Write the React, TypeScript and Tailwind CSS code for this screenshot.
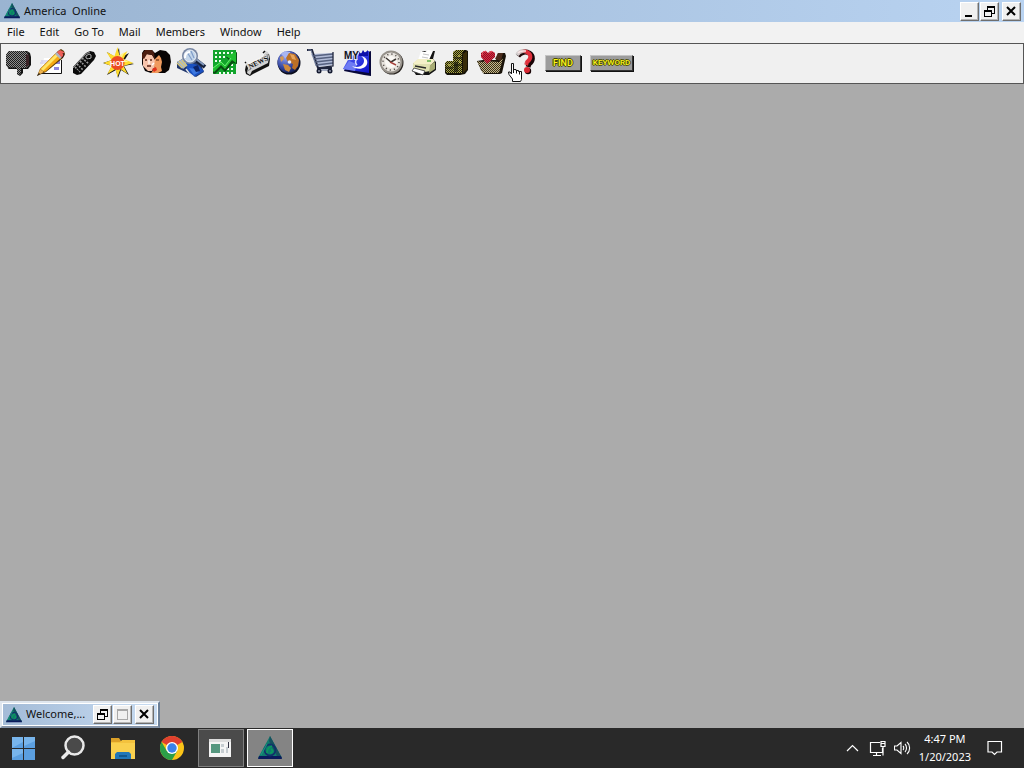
import React from "react";
import clsx from "clsx";

const menus = ["File", "Edit", "Go To", "Mail", "Members", "Window", "Help"];

interface IconProps {
  w: number;
  children: React.ReactNode;
}

const ToolIcon: React.FC<IconProps> = ({ w, children }) => (
  <svg width={w} height={28} viewBox={`0 0 ${w} 28`} className="overflow-visible" aria-hidden="true">
    {children}
  </svg>
);

const Dithers = () => (
  <svg width="0" height="0" className="absolute" aria-hidden="true">
    <defs>
      <pattern id="dither-gray" width="2" height="2" patternUnits="userSpaceOnUse">
        <rect width="2" height="2" fill="#8e8e8e" />
        <rect width="1" height="1" fill="#1c1c1c" />
        <rect x="1" y="1" width="1" height="1" fill="#1c1c1c" />
      </pattern>
      <pattern id="dither-olive" width="2" height="2" patternUnits="userSpaceOnUse">
        <rect width="2" height="2" fill="#a8a444" />
        <rect width="1" height="1" fill="#1b1a08" />
        <rect x="1" y="1" width="1" height="1" fill="#1b1a08" />
      </pattern>
      <pattern id="dither-tan" width="2" height="2" patternUnits="userSpaceOnUse">
        <rect width="2" height="2" fill="#c4b78c" />
        <rect width="1" height="1" fill="#3a3018" />
        <rect x="1" y="1" width="1" height="1" fill="#3a3018" />
      </pattern>
      <pattern id="dither-red" width="2" height="2" patternUnits="userSpaceOnUse">
        <rect width="2" height="2" fill="#dc2a40" />
        <rect width="1" height="1" fill="#8c1426" />
        <rect x="1" y="1" width="1" height="1" fill="#8c1426" />
      </pattern>
      <linearGradient id="my-blue" x1="0" y1="0" x2="1" y2="1">
        <stop offset="0" stopColor="#c8d0ff" />
        <stop offset="0.4" stopColor="#3a46e6" />
        <stop offset="1" stopColor="#0d10c8" />
      </linearGradient>
      <radialGradient id="globe" cx="0.35" cy="0.3" r="0.8">
        <stop offset="0" stopColor="#8f9ff0" />
        <stop offset="0.6" stopColor="#33459e" />
        <stop offset="1" stopColor="#0a1238" />
      </radialGradient>
      <linearGradient id="question" x1="0" y1="0" x2="1" y2="0">
        <stop offset="0" stopColor="#d4d0d0" />
        <stop offset="0.4" stopColor="#c9b4b4" />
        <stop offset="0.7" stopColor="#e0303c" />
      </linearGradient>
    </defs>
  </svg>
);

const tools = [
  {
    label: "Read New Mail",
    icon: (
      <ToolIcon w={25}>
        <path d="M4 2h18l3 2 1 4v8l-3 4h-5v4l-3 3-3-2v-5H4l-3-4V6z" fill="#141414" />
        <path d="M4 2h16l3 2 1 4v8l-3 3h-5v5l-2 2-2-1v-6H4l-3-3V6z" fill="url(#dither-gray)" />
        <path d="M21 5l3 1v10l-3 2z" fill="#3a2226" />
        <path d="M3 19h8" stroke="#141414" />
      </ToolIcon>
    ),
  },
  {
    label: "Compose Mail",
    icon: (
      <ToolIcon w={28}>
        <path d="M7 9h17v15H4z" fill="#fff" />
        <path d="M4 24.5h20.5V11" fill="none" stroke="#111" />
        <path d="M17 18h5v3h-5zM19 11h4v4h-4z" fill="#8f86e0" />
        <path d="M4 12h8M3 14h6" stroke="#c5c0ee" />
        <path d="M0 27l3-7L21 2l3-2 3 2 1 3-2 4L9 23z" fill="#5b3a08" />
        <path d="M3 20L19 4l5 5L8 23z" fill="#f5a814" />
        <path d="M4 20L20 4l2 2L6 22z" fill="#ffe568" />
        <path d="M1 26l2-6 4 3z" fill="#f0b450" />
        <path d="M0 27l2-3 1 1z" fill="#111" />
        <path d="M18 5l2-2 5 5-2 2z" fill="#aeb4c0" />
        <path d="M20 3l3-2 4 2v4l-2 2z" fill="#ee6058" />
        <path d="M26 4l1 2-2 3" fill="none" stroke="#111" />
      </ToolIcon>
    ),
  },
  {
    label: "Channels",
    icon: (
      <ToolIcon w={24}>
        <path d="M1 18L14 4l4-2 4 1 2 4-2 4L9 25l-4 1-4-2z" fill="#0b0b0b" />
        <path d="M1 19L14 5l4-2" fill="none" stroke="#8d8d8d" />
        <path d="M14 7l3-2 2 1v3l-3 1-2-1z" fill="none" stroke="#b0b0b0" />
        <path d="M10 9l7 6M8 12l6 6M5 15l6 6M3 18l5 5" stroke="#9c9c9c" strokeWidth="1.6" strokeDasharray="2 1" />
        <path d="M4 23L17 10" stroke="#0b0b0b" strokeWidth="0.8" />
      </ToolIcon>
    ),
  },
  {
    label: "What's Hot",
    icon: (
      <ToolIcon w={31}>
        <path d="M16-1l1 10 9-5-5 8 10 3-10 2 5 9-8-5-3 8-2-8-9 5 5-9-9-3 9-3-5-8 8 5z" fill="#111" />
        <path d="M14.5-2l2 9 8-5-4 8 10 4-10 3 4 8-7-5-3 8-2-8-8 5 4-8-8-3 8-3-5-8 8 4z" fill="#ffdc2c" />
        <path d="M14.500 0l1 7 6-4-3 6 7 4h-9z" fill="#fff290" />
        <circle cx="14.5" cy="14" r="7" fill="#ec4a22" />
        <text x="14.5" y="17" textAnchor="middle" fontFamily="Liberation Sans, sans-serif" fontSize="7" fontWeight="700" fill="#fff">HOT</text>
      </ToolIcon>
    ),
  },
  {
    label: "People Connection",
    icon: (
      <ToolIcon w={29}>
        <path d="M3 1h8l3 3 5-3 6 1 4 4 1 7-2 8-4 3H10l-6-2-3-7V4z" fill="#080404" />
        <path d="M2 8l3-3 6 1 3 5v6l-3 5H7l-5-5z" fill="#f7c4ac" />
        <path d="M1 5l3-4h7l2 3 1 6-3-4-5-1-3 5-2-1z" fill="#4b1d10" />
        <path d="M14 10l4-4 2 3 1 4-1 5 1 4-4 2h-7l3-4z" fill="#f09a5e" />
        <path d="M4 11h2m3 0h2M6 17h4" stroke="#5b2518" strokeWidth="1.3" />
        <path d="M8 11v4" stroke="#fff1e8" strokeWidth="1.5" />
        <path d="M15 11h3" stroke="#4a1d0a" />
        <path d="M11 20l4-2 1 3-3 2z" fill="#e2301c" />
        <path d="M11 16l2-2" stroke="#fff" strokeWidth="1.5" />
      </ToolIcon>
    ),
  },
  {
    label: "File Search",
    icon: (
      <ToolIcon w={28}>
        <path d="M0 13l7-4 16 4 4 10-8 5-4-2L0 19z" fill="#24396c" />
        <path d="M0 13l7-4 5 6-6 5z" fill="#a9b9cc" />
        <path d="M9 13l12 3 6 6-10 6-7-8z" fill="#1a50c0" />
        <path d="M12 19l7 1 3 3-5 3z" fill="#3c78e0" />
        <path d="M16 18l5-2 2 6-4 1z" fill="#0c2468" />
        <path d="M0 14l5 5M2 12l6 6M5 11l5 6" stroke="#d8c672" strokeWidth="1.2" />
        <path d="M9 20l3 4 5 4" fill="none" stroke="#e2e6ee" strokeWidth="1.5" />
        <path d="M19 11l9 7" stroke="#15203a" strokeWidth="4" />
        <path d="M19 10l8 6" stroke="#8298bc" strokeWidth="2" />
        <circle cx="13" cy="7" r="8" fill="#7685a2" />
        <circle cx="13" cy="7" r="6" fill="#c4d6ea" stroke="#e8eef6" />
        <path d="M10 3l5 8M14 2l3 7" stroke="#7f9cc8" strokeWidth="1.2" />
        <path d="M8 9c0-4 2-6 5-6" fill="none" stroke="#fff" strokeWidth="2" />
      </ToolIcon>
    ),
  },
  {
    label: "Stocks & Portfolios",
    icon: (
      <ToolIcon w={25}>
        <g shapeRendering="crispEdges">
          <path d="M1 1h23v24H1z" fill="#12a42c" />
          <path
            d="M3 3h2v2H3zM7 3h2v2H7zM11 3h2v2h-2zM15 3h2v2h-2zM19 3h2v2h-2zM3 7h2v2H3zM7 7h2v2H7zM11 7h2v2h-2zM3 11h2v2H3zM7 11h2v2H7zM15 19h2v2h-2zM19 19h2v2h-2zM19 15h2v2h-2zM15 23h2v2h-2zM19 23h2v2h-2zM11 23h2v2h-2zM7 23h2v2H7zM11 19h2v2h-2z"
            fill="#effff0"
          />
        </g>
        <path d="M1 24v-3l8-8 4 4 5-5-4-4 11-5v12l-4-1-8 9-4-4-6 6z" fill="#084d12" />
        <path d="M1 22v-3l8-7 4 4 5-6-4-3 10-4v11l-4-3-7 9-4-4-7 7z" fill="#1fbf30" />
        <path d="M1 19l8-6 4 4 6-8" fill="none" stroke="#69ea70" />
      </ToolIcon>
    ),
  },
  {
    label: "Today's News",
    icon: (
      <ToolIcon w={26}>
        <path d="M2 16l4 1 13-7 2-6 4 1 1 5-1 7-16 8-3 2-4-2-1-4z" fill="#111" />
        <path d="M1 14l4 1 14-7 2-6 3 1 1 5-1 6-16 8-2 4-3-2 1-5z" fill="#d2d2d2" />
        <path d="M4 15l14-7 3-5" fill="none" stroke="#f8f8f8" />
        <path d="M3 22l4-2M23 5l1 7" stroke="#838383" />
        <path d="M1 13l1 1m17-10 2-2" stroke="#111" strokeWidth="1.5" />
        <text x="6" y="20" transform="rotate(-27 6 20)" fontFamily="Liberation Serif, serif" fontSize="7" fontWeight="700" fill="#111">NEWS</text>
      </ToolIcon>
    ),
  },
  {
    label: "Internet Connection",
    icon: (
      <ToolIcon w={23}>
        <circle cx="12" cy="14" r="11.5" fill="#0b0d1c" />
        <circle cx="11.5" cy="13" r="11" fill="url(#globe)" />
        <path d="M4 5l4-3 5 1 1 4-3 3-3-1z" fill="#a9b6f4" />
        <path d="M12 4l6 1 4 6-1 6-3 4-3-2 1-4-5-2-2-4z" fill="#bc7026" />
        <path d="M13 5l4 1 2 5-4-1z" fill="#e6a45c" />
        <path d="M6 15l5 1 3 3-2 4-4-2z" fill="#cf8a3c" />
        <path d="M3 8l3-1 1 3-3 3z" fill="#d49a5a" />
        <circle cx="12.5" cy="13" r="1.8" fill="#e6ebfa" />
      </ToolIcon>
    ),
  },
  {
    label: "Marketplace",
    icon: (
      <ToolIcon w={29}>
        <path d="M4 5l22-1-1 12-15 2z" fill="#b2bcd8" />
        <path d="M0 1h5l6 18h14" fill="none" stroke="#20263e" strokeWidth="2" />
        <path d="M1 1h3l5 16" fill="none" stroke="#74809c" />
        <path d="M6 7l20-2M7 10l19-2M8 13l18-2M9 16l17-2" stroke="#55617f" strokeWidth="1.3" />
        <path d="M26 3v14l-15 2" fill="none" stroke="#20263e" strokeWidth="1.3" />
        <path d="M10 21h14" stroke="#8e98b4" strokeWidth="1.5" />
        <circle cx="12" cy="22" r="2.5" fill="#141a30" />
        <circle cx="23" cy="22" r="2.5" fill="#141a30" />
        <path d="M11 22h2m9 0h2" stroke="#cdd4e6" />
      </ToolIcon>
    ),
  },
  {
    label: "My AOL",
    icon: (
      <ToolIcon w={29}>
        <path d="M6 9l22-7v25l-7-1-20-4z" fill="#08083a" />
        <path d="M7 7l19-5v22L0 20z" fill="url(#my-blue)" />
        <path d="M0 20l6-8 8 3-2 7z" fill="#6f7cf4" />
        <path d="M18 7c7 1 8 8 4 11-4 3-10 2-13-1 4 2 9 1 11-2 2-3 1-6-2-8z" fill="#fff" />
        <path d="M14 10c-2 2-2 4 0 6" fill="none" stroke="#d8ddff" strokeWidth="1.5" />
        <path d="M16 2l2 3 2-4 2 3 3-3v6h-9z" fill="#0d10a8" />
        <text x="1" y="10" fontFamily="Liberation Sans, sans-serif" fontSize="10" fontWeight="700" fill="#10101c" stroke="#e4e6f2" strokeWidth="2" paintOrder="stroke">MY</text>
      </ToolIcon>
    ),
  },
  {
    label: "Online Clock",
    icon: (
      <ToolIcon w={26}>
        <circle cx="13" cy="14" r="11.5" fill="#2a2622" />
        <circle cx="12" cy="13" r="11.5" fill="#96918a" />
        <circle cx="12" cy="13" r="9.5" fill="#e8e4de" />
        <circle cx="12" cy="13" r="8" fill="none" stroke="#544e4a" strokeWidth="1.5" strokeDasharray="1.2 3" />
        <circle cx="12" cy="13" r="6" fill="#fbf9f5" />
        <path d="M7 9l5 4 5-3" fill="none" stroke="#3a3430" strokeWidth="1.5" />
        <path d="M11 13l6 3" stroke="#a6423c" strokeWidth="1.5" />
      </ToolIcon>
    ),
  },
  {
    label: "Print",
    icon: (
      <ToolIcon w={26}>
        <path d="M10 2h13l-2 8 3 3v8l-7 5H4l-3-5v-6l6-5z" fill="#141414" />
        <path d="M9 2l4 1 3-2 5 1-4 9H6z" fill="#fff" />
        <path d="M11 5l6 1M10 8l6 1" stroke="#c4c4c4" />
        <path d="M1 14l5-4h15l2 2-5 5H3z" fill="#f4f0c8" />
        <path d="M1 15h17v7l-5 1-12-3z" fill="#dfe0b0" />
        <path d="M18 16l5-3v7l-6 4z" fill="#a8ac74" />
        <path d="M3 17l11 2" stroke="#282828" strokeWidth="1.5" />
        <path d="M2 19l11 3-2 4-11-4z" fill="#fff" stroke="#333" strokeWidth="0.8" />
        <path d="M15 12h4" stroke="#5cae48" strokeWidth="1.5" />
      </ToolIcon>
    ),
  },
  {
    label: "Personal Filing Cabinet",
    icon: (
      <ToolIcon w={25}>
        <path d="M9 3l3-2h9l2 1v19l-3 4-5 1H2l-2-2v-9l3-2h6z" fill="#151206" />
        <path d="M8 3l3-2h8l-2 4v19H8z" fill="url(#dither-olive)" />
        <path d="M0 14l2-2h7v12H1z" fill="url(#dither-olive)" />
        <path d="M18 5l4-3v18l-4 4z" fill="#382c08" />
        <path d="M9 9h8M9 16h8M1 19h7" stroke="#16150a" />
        <path d="M9 13h4v10H9z" fill="#16150a" opacity="0.6" />
        <path d="M13 7h2M14 13h2M3 16h3" stroke="#d8d25c" />
      </ToolIcon>
    ),
  },
  {
    label: "Favorite Places",
    icon: (
      <ToolIcon w={28}>
        <path d="M0 12l6-1h13l2-7h7l1 3-4 17-2 1H7l-3-4z" fill="#181208" />
        <path d="M18 10l3-6h5l-2 8z" fill="#4a2c1c" />
        <path d="M0 12l5 1 3-1 14 1 4-4-4 15H6z" fill="url(#dither-tan)" />
        <path d="M10 15L4 8V4l3-2h2l2 2 2-2h2l3 2v4z" fill="url(#dither-red)" />
        <path d="M5 6l1-3 3-1M12 4l3-2" fill="none" stroke="#ee5a68" />
      </ToolIcon>
    ),
  },
  {
    label: "Member Services",
    icon: (
      <ToolIcon w={26}>
        <path d="M6 7c3-4 8-5 11-3 5 3 4 8 0 11l-1 3" fill="none" stroke="#190406" strokeWidth="5" />
        <path d="M5 6c3-5 8-4 10-3 5 3 4 7 0 10l-1 3" fill="none" stroke="url(#question)" strokeWidth="4" />
        <path d="M6 4c2-3 6-2 8-2" fill="none" stroke="#f6e4e4" strokeWidth="1.5" />
        <circle cx="16" cy="22" r="3.2" fill="#190406" />
        <circle cx="15" cy="21" r="3" fill="#d82732" />
      </ToolIcon>
    ),
  },
];

const HandCursor = () => (
  <svg width="18" height="20" viewBox="0 0 18 20" className="absolute top-[18px] left-[506px]" aria-hidden="true">
    <path
      d="M4.5 1.5h2v6h2.500v1h2.500v1h3v8l-1 2h-8V17L2 12.500l-.5-2.500h1.500l1.500 2z"
      fill="#fff"
      stroke="#111"
    />
    <path d="M6.500 7v4M9.500 8.500v3M12.500 9.500v3" stroke="#111" />
  </svg>
);

const AolLogo: React.FC<{ className: string }> = ({ className }) => (
  <svg viewBox="0 0 24 24" className={className} aria-hidden="true">
    <path d="M12 0L0 22h24z" fill="#0f7a6c" />
    <path d="M12 0l12 22h-4L11 5z" fill="#15505e" />
    <path d="M1 20h22l1 3H0z" fill="#0b1a5c" />
    <circle cx="12" cy="14" r="5.5" fill="none" stroke="#12306a" strokeWidth="1.8" />
    <path d="M9 17c0-4 2-6 5-7M12 17c3 0 3-3 1-4" fill="none" stroke="#0a9a5c" strokeWidth="1.6" />
    <path d="M3 19l6-11" stroke="#18947c" strokeWidth="1.2" />
  </svg>
);

type Glyph = "minimize" | "restore" | "maximize" | "close";

const CaptionButton: React.FC<{ glyph: Glyph; className?: string }> = ({ glyph, className }) => (
  <button
    aria-label={glyph}
    disabled={glyph === "maximize"}
    className={clsx(
      "flex h-[19px] w-[19px] items-center justify-center border border-t-white border-l-white border-r-[#6e6e6e] border-b-[#6e6e6e] bg-[#f0f0f0] shadow-[inset_-1px_-1px_0_#b5b5b5]",
      className
    )}
  >
    <svg width="13" height="13" viewBox="0 0 13 13" fill="none" stroke="#000" shapeRendering="crispEdges">
      {glyph === "minimize" && <path d="M2 11h7" strokeWidth="2" />}
      {glyph === "restore" && (
        <>
          <path d="M4 2h8M1 6h8" strokeWidth="2" />
          <path d="M4.5 2v3M11.5 2v6.5H9M1.5 6v5.5h7V6" />
        </>
      )}
      {glyph === "maximize" && (
        <>
          <path d="M1.5 2v9.500h10V2" stroke="#a8a8a8" />
          <path d="M1 2h11" stroke="#a8a8a8" strokeWidth="2" />
        </>
      )}
      {glyph === "close" && <path d="M2 2l8 8M10 2l-8 8" strokeWidth="2" shapeRendering="auto" />}
    </svg>
  </button>
);

const TextTool: React.FC<{ label: string; className: string }> = ({ label, className }) => (
  <button
    className={clsx(
      "flex h-4 items-center justify-center border border-t-[#c4c4c4] border-l-[#c4c4c4] border-r-[#333] border-b-[#333] bg-[#9c9c9c] font-['Roboto',sans-serif] leading-3 font-medium text-[#fbf71c] shadow-[1px_1px_0_#111] [text-shadow:1px_0_0_#4a4a00,-1px_0_0_#4a4a00,0_1px_0_#4a4a00,0_-1px_0_#4a4a00]",
      className
    )}
  >
    {label}
  </button>
);

const taskbarItem = "flex h-[38px] w-[46px] items-center justify-center";

const Taskbar = () => (
  <footer className="flex h-10 items-center justify-between bg-[#292929] pr-[21px] pl-0.5 text-white">
    <div className="flex gap-[3px]">
      <button className={taskbarItem} aria-label="Start">
        <svg width="26" height="24" viewBox="0 0 26 24">
          <path d="M0 1h11v11H0zM12 1h11v11H12zM0 13h11v11H0zM12 13h11v11H12z" fill="#5b9fe0" />
          <path d="M0 1h11v5L0 12zM12 1h11v4l-11 5zM0 13h11v4L0 22z" fill="#78b5ec" />
        </svg>
      </button>
      <button className={taskbarItem} aria-label="Search">
        <svg width="28" height="26" viewBox="0 0 28 26" fill="none" stroke="#e9e9e9">
          <circle cx="14.5" cy="10.5" r="9" strokeWidth="2.5" fill="#4a4a4a" />
          <path d="M8.500 17L3 22.500" strokeWidth="3.5" strokeLinecap="round" />
        </svg>
      </button>
      <button className={taskbarItem} aria-label="File Explorer">
        <svg width="26" height="24" viewBox="0 0 26 24">
          <path d="M1 2h8l2 3h14v5H1z" fill="#dba028" />
          <path d="M1 7h24v16H1z" fill="#f9d04e" />
          <path d="M1 6h9l2-2h13v3H1z" fill="#f3c23d" />
          <path d="M5 23v-5l2-2h12l2 2v5z" fill="#2277b8" />
          <path d="M9 19h8v2H9z" fill="#12588f" />
        </svg>
      </button>
      <button className={taskbarItem} aria-label="Chrome">
        <svg width="24" height="24" viewBox="0 0 24 24">
          <circle cx="12" cy="12" r="12" fill="#fbc418" />
          <path d="M12 12L1.600 6a12 12 0 0 1 20.800 0z" fill="#e0402f" />
          <path d="M1.600 6a12 12 0 0 0 10.400 18l5.200-9H6.800z" fill="#2c9f48" />
          <circle cx="12" cy="12" r="6" fill="#fff" />
          <circle cx="12" cy="12" r="4.7" fill="#3b82ea" />
        </svg>
      </button>
      <button className={clsx(taskbarItem, "border border-[#808080] bg-[#4b4b4b]")} aria-label="Application window">
        <svg width="26" height="20" viewBox="0 0 26 20">
          <path d="M1 1h22v18H1z" fill="#f4f4f4" />
          <path d="M1 1h22v3H1z" fill="#dcdcdc" />
          <path d="M3 6h9v9H3z" fill="#56977f" />
          <path d="M13 6h3v3h-3zM13 11h3v4h-3zM18 9h2v6h-2z" fill="#c5ccd0" />
          <path d="M20 4h1v6h-1z" fill="#334" />
        </svg>
      </button>
      <button className={clsx(taskbarItem, "border border-white bg-[#848484]")} aria-label="America Online">
        <AolLogo className="h-6 w-6" />
      </button>
    </div>

    <div className="flex items-center">
      <button aria-label="Show hidden icons" className="mr-2.5">
        <svg width="13" height="8" viewBox="0 0 13 8" fill="none" stroke="#fff" strokeWidth="1.2">
          <path d="M1 7l5.500-5.500L12 7" />
        </svg>
      </button>
      <button aria-label="Network" className="mr-2">
        <svg width="17" height="17" viewBox="0 0 17 17" fill="none" stroke="#fff" strokeWidth="1.2">
          <path d="M11 2.500H1.500v10h12V8M4 15.500h8M7.500 12.500v3" />
          <path d="M12 1.500h4v5h-4zM14 6.500v9M12 3.500h4" />
        </svg>
      </button>
      <button aria-label="Volume" className="mr-2">
        <svg width="17" height="14" viewBox="0 0 17 14" fill="none" stroke="#fff" strokeWidth="1.1">
          <path d="M.5 5v4H3l4 3.500v-11L3 5zM9 5c1 1 1 3 0 4M11 3c2 2 2 6 0 8M13 1c3.500 3 3.500 9 0 12" />
        </svg>
      </button>
      <button className="mr-4 text-center text-[11px] leading-[18px]">
        <span className="block">4:47 PM</span>
        <span className="block">1/20/2023</span>
      </button>
      <button aria-label="Notifications">
        <svg width="16" height="16" viewBox="0 0 16 16" fill="none" stroke="#fff" strokeWidth="1.2">
          <path d="M1 1.500h13.500v10.500H10L7.500 14.500 5 12H1z" />
        </svg>
      </button>
    </div>
  </footer>
);

export default function App() {
  return (
    <div className="flex min-h-screen flex-col bg-[#ababab] font-['Noto_Sans',sans-serif] text-[11px] text-[#111]">
      <Dithers />
      <header>
        <div className="flex h-[22px] items-center bg-linear-to-r from-[#9ab4d1] to-[#b9d3f1] pr-[3px] pl-1">
          <AolLogo className="mr-1 h-4 w-4" />
          <h1 className="flex-1 whitespace-pre">America  Online</h1>
          <CaptionButton glyph="minimize" className="mr-px" />
          <CaptionButton glyph="restore" className="mr-[3px]" />
          <CaptionButton glyph="close" />
        </div>

        <nav className="flex h-[21px] items-start gap-px bg-[#f2f2f2]">
          {menus.map((menu) => (
            <button key={menu} className="px-[7px] leading-5">
              {menu}
            </button>
          ))}
        </nav>

        <div className="relative flex h-[41px] items-center gap-[7px] border border-[#555] bg-[#f0f0f0] pb-px pl-1">
          {tools.map((tool) => (
            <button key={tool.label} aria-label={tool.label}>
              {tool.icon}
            </button>
          ))}
          <TextTool label="FIND" className="mr-0.5 w-9 text-[9px]" />
          <TextTool label="KEYWORD" className="w-[43px] text-[8px]" />
          <HandCursor />
        </div>
      </header>

      <main className="flex flex-1 items-end">
        <section className="flex h-[27px] w-40 items-center border-2 border-t-[#dfe6ee] border-l-[#dfe6ee] border-r-[#6c7f96] border-b-[#8594a8] bg-linear-to-r from-[#a3bbd7] to-[#c8dcf2] pr-1 pl-1 ring-1 ring-white ring-inset">
          <AolLogo className="mr-1 h-4 w-4" />
          <span className="flex-1">Welcome,...</span>
          <CaptionButton glyph="restore" className="mr-px" />
          <CaptionButton glyph="maximize" className="mr-[3px]" />
          <CaptionButton glyph="close" />
        </section>
      </main>

      <Taskbar />
    </div>
  );
}
